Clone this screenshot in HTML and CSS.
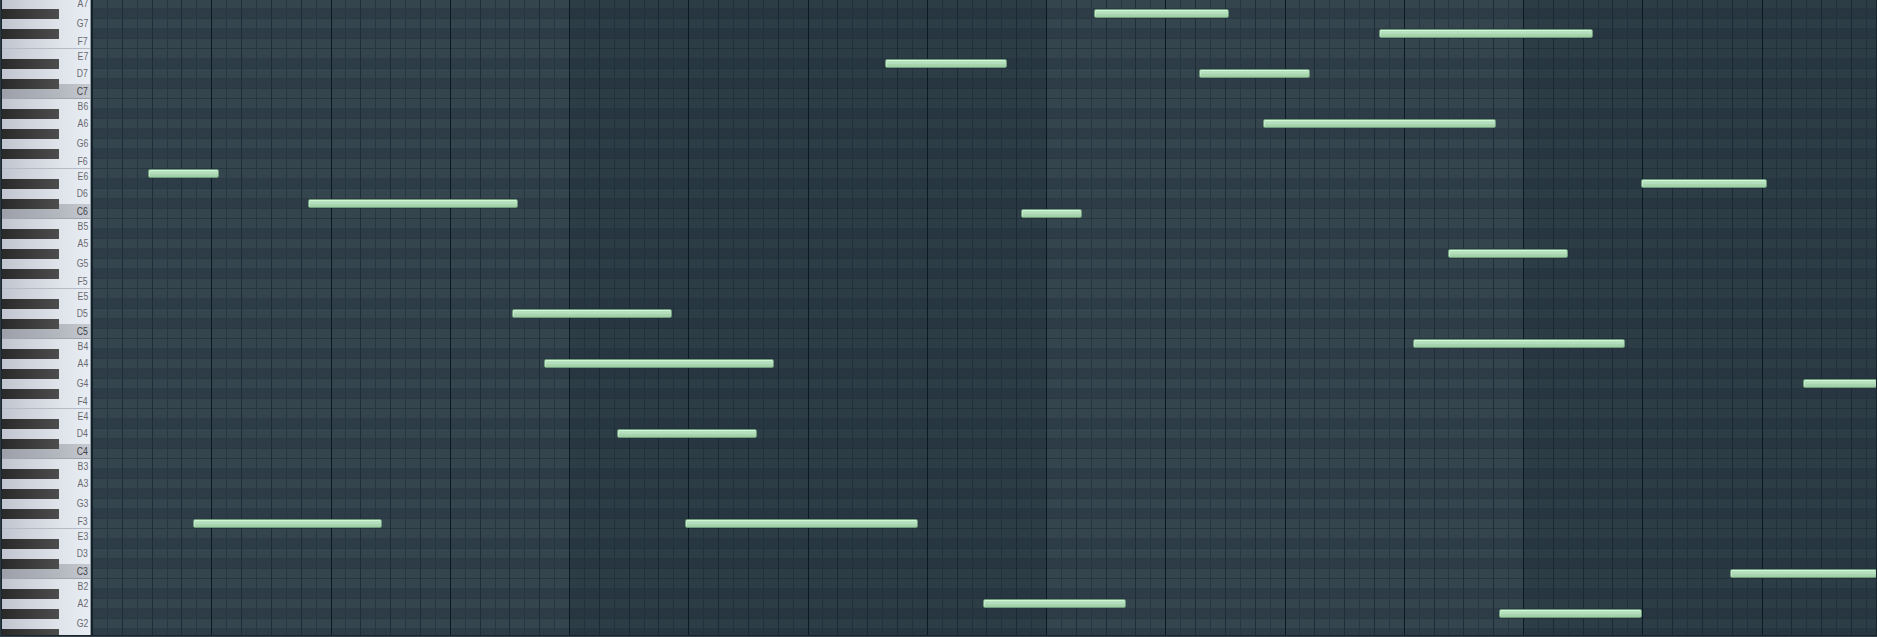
FILE: index.html
```html
<!DOCTYPE html>
<html lang="en">
<head>
<meta charset="utf-8">
<title>Piano roll</title>
<link rel="stylesheet" href="styles.css">
</head>
<body>
<main class="roll">
  <aside class="keys">
    <div class="white-keys" id="white-keys"></div>
    <div class="black-keys" id="black-keys"></div>
  </aside>
  <section class="grid">
    <div class="rows" id="rows"></div>
    <div class="columns" id="columns"></div>
    <div class="notes" id="notes"></div>
  </section>
</main>
<script src="roll.js"></script>
</body>
</html>
```
FILE: styles.css
```css
* { box-sizing: border-box; }
body { margin: 0; overflow: hidden; background: #26343d; }
.roll {
  display: flex;
  width: 1877px;
  height: 637px;
  padding: 0 1px 1px;
  overflow: hidden;
  background: #1a262e;
  border-bottom: 1px solid #3a444c;
  border-left: 1px solid #2b3a43;
}
.keys {
  position: relative;
  flex: none;
  width: 89px;
  height: 635px;
  overflow: hidden;
  background: linear-gradient(90deg, #bfc4ce 0, #d0d5de 30px, #dfe4ea 58px, #e8edf4 100%);
  border-right: 1px solid #929ca4;
}
.white-keys { margin-top: -6px; }
.key {
  display: flex;
  align-items: center;
  justify-content: flex-end;
  height: 15px;
  padding-right: 2px;
}
.key-tall { height: 20px; }
.key-label {
  font: 10px/12px "Liberation Sans", Arial, sans-serif;
  color: #696970;
  transform: scaleX(.87);
  transform-origin: right;
}
.key-f { border-bottom: 1px solid #b5bac4; padding-top: 2px; }
.key-c {
  padding-top: 2px;
  background: linear-gradient(90deg, #9c9fa8, #b4b8bf 58px, #c6cad0);
  border-bottom: 1px solid #a3a3b0;
}
.key-c .key-label { color: #424248; }
.black-keys { position: absolute; top: -1px; left: 0; width: 57px; }
.slot { height: 10px; }
.slot-black { background: linear-gradient(90deg, #292929, #4d4d4d); }
.grid {
  position: relative;
  flex: 1;
  height: 635px;
  overflow: hidden;
  border-left: 2px solid #12212a;
}
.rows { margin-top: -1px; }
.row { height: 10px; background: #34454e; border-bottom: 1px solid #2b3a44; }
.row-sharp { background: #2d3c46; border-color: #293842; }
.row-edge { border-color: #273640; }
.columns { position: absolute; inset: 0; display: flex; }
.column { flex: none; height: 100%; border-right: 1px solid #273741; }
.column-step { border-color: #1e2d37; }
.column-beat { border-color: #0b1922; }
.column-shade { background: rgba(15, 30, 40, .2); }
.column-shade:not(.column-step):not(.column-beat) { border-color: #22323c; }
.column-shade.column-step { border-color: #1a2933; }
.notes { position: absolute; inset: 0; }
.note {
  position: absolute;
  height: 9px;
  border: 1px solid #729a7c;
  border-radius: 2px;
  background: linear-gradient(#cdfad3 0, #cdfad3 1px, #b8e2c1 1px, #b2dcba 4px, #a8d7af 4px, #a5d4ac 6px, #98cc9f 7px);
  box-shadow: inset 1px 0 rgba(201, 247, 207, .6);
}
```
FILE: roll.js
```js
const GRID_LEFT = 93;
const FIRST_BEAT = 92.05;
const STEP = 14.906;
const pitches = ['A', 'G#', 'G', 'F#', 'F', 'E', 'D#', 'D', 'C#', 'C', 'B', 'A#'];

function add(parent, className) {
  const el = document.createElement('div');
  el.className = className;
  document.getElementById(parent).append(el);
  return el;
}

// Horizontal lanes and black keys, one per semitone from A7 down
for (let i = 0; i < 64; i++) {
  const pitch = pitches[i % 12];
  const sharp = pitch.includes('#');
  const edge = pitch === 'F' || pitch === 'C';
  add('rows', 'row' + (sharp ? ' row-sharp' : '') + (edge ? ' row-edge' : ''));
  add('black-keys', 'slot' + (sharp ? ' slot-black' : ''));
}

// White keys
const whites = ['A', 'G', 'F', 'E', 'D', 'C', 'B'];
for (let i = 0; i < 37; i++) {
  const name = whites[i % 7];
  const octave = 7 - Math.floor((i + 1) / 7);
  const key = add('white-keys', 'key key-' + name.toLowerCase() + ('AGD'.includes(name) ? ' key-tall' : ''));
  const label = document.createElement('span');
  label.className = 'key-label';
  label.textContent = name + octave;
  key.append(label);
}

// Step columns: 8 steps to a beat line, 32 to a bar
let left = GRID_LEFT;
for (let i = 1; left < 1876; i++) {
  const right = Math.round(FIRST_BEAT + i * STEP) + 1;
  const kind = i % 8 === 0 ? ' column-beat' : i % 2 === 0 ? ' column-step' : '';
  const shade = Math.floor((i - 1) / 32) % 2 ? ' column-shade' : '';
  add('columns', 'column' + kind + shade).style.width = (right - left) + 'px';
  left = right;
}

// Notes: start, end, lane
const notes = [
  [1094, 1229, 1], [1379, 1593, 3], [885, 1007, 6], [1199, 1310, 7],
  [1263, 1496, 12], [148, 219, 17], [1641, 1767, 18], [308, 518, 20],
  [1021, 1082, 21], [1448, 1568, 25], [512, 672, 31], [1413, 1625, 34],
  [544, 774, 36], [1803, 1877, 38], [617, 757, 43], [193, 382, 52],
  [685, 918, 52], [1730, 1877, 57], [983, 1126, 60], [1499, 1642, 61]
];
for (const [start, end, lane] of notes) {
  const note = add('notes', 'note');
  note.style.left = (start - GRID_LEFT) + 'px';
  note.style.top = (lane * 10 - 1) + 'px';
  note.style.width = (end - start) + 'px';
}
```
